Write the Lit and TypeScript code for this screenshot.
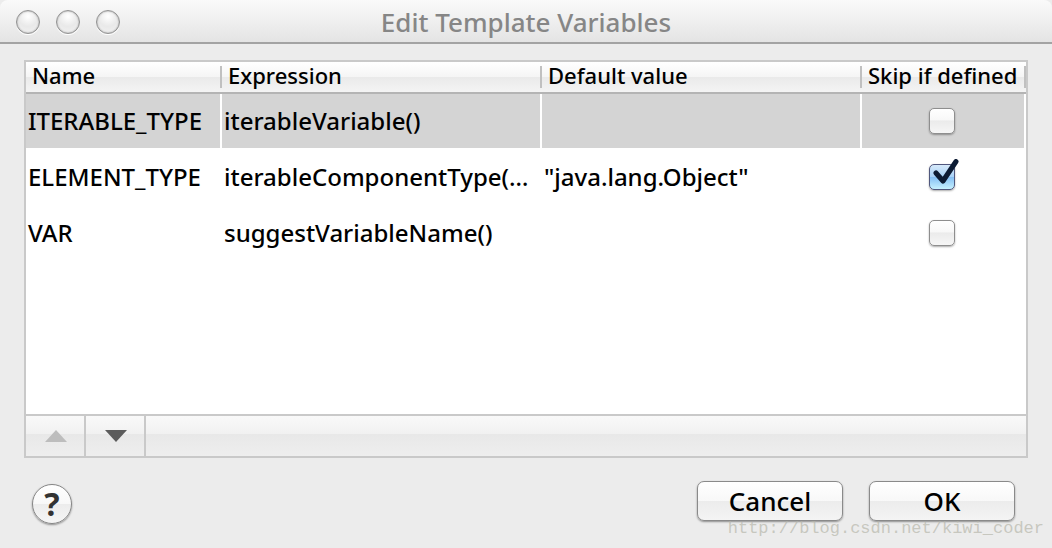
import { LitElement, html, css, svg, nothing } from "lit";
import { customElement, state } from "lit/decorators.js";
import { classMap } from "lit/directives/class-map.js";

interface TemplateVariable {
  name: string;
  expression: string;
  defaultValue: string;
  skip: boolean;
}

const checkMark = svg`<path d="M7 14 L14 22 L27 2.5" fill="none" stroke="#0c1b33" stroke-width="5" stroke-linecap="round" stroke-linejoin="round"/>`;

@customElement("app-root")
export class AppRoot extends LitElement {
  static styles = css`
    :host {
      display: flex;
      flex-direction: column;
      box-sizing: border-box;
      min-height: 100vh;
      position: relative;
      background: #ececec;
      color: #000;
      font-family: "Noto Sans", "Open Sans", sans-serif;
      font-size: 24px;
      font-weight: 500;
      line-height: 32px;
    }
    * {
      box-sizing: border-box;
    }
    button {
      font: inherit;
      color: inherit;
      padding: 0;
      margin: 0;
    }
    .titlebar {
      display: grid;
      grid-template-columns: 1fr auto 1fr;
      align-items: center;
      height: 44px;
      padding: 2px 16px 0;
      background: linear-gradient(#fafafa, #e4e4e4);
      border-bottom: 2px solid #a3a3a3;
      border-radius: 8px 8px 0 0;
    }
    .lights {
      display: flex;
      gap: 16px;
    }
    .light {
      width: 24px;
      height: 24px;
      border: 1px solid #929292;
      border-radius: 50%;
      background: radial-gradient(circle at 50% 25%, #ffffff, #e9e9e9 50%, #f3f3f3);
      box-shadow: inset 0 0 2px #00000066, 0 1px 0 #ffffff;
    }
    h1 {
      margin: 0;
      font-size: 26px;
      font-weight: 500;
      color: #868686;
    }
    .content {
      flex: 1;
      display: flex;
      flex-direction: column;
      padding: 16px 24px 24px;
    }
    .panel {
      flex: 1;
      display: flex;
      flex-direction: column;
      border: 2px solid #c9c9c9;
      background: #fff;
    }
    .list {
      flex: 1;
    }
    table {
      width: 100%;
      table-layout: fixed;
      border-collapse: separate;
      border-spacing: 0;
    }
    .col-name {
      width: 19.6%;
    }
    .col-wide {
      width: 32%;
    }
    .col-skip {
      width: 16.4%;
    }
    th {
      height: 32px;
      padding: 0;
      font-size: 22px;
      font-weight: 500;
      line-height: 18px;
      text-align: left;
      white-space: nowrap;
      background: linear-gradient(#ffffff, #f5f5f5 50%, #eaeaea 51%, #f4f4f4);
      border-bottom: 2px solid #b4b4b4;
    }
    th span {
      display: block;
      padding: 0 0 4px 6px;
      border-right: 2px solid #c0c0c0;
    }
    td {
      height: 56px;
      padding: 0 2px;
      overflow: hidden;
      white-space: nowrap;
      text-overflow: ellipsis;
      border-right: 2px solid #fff;
      border-bottom: 2px solid #fff;
    }
    .selected td {
      background: #d4d4d4;
    }
    td.skip {
      padding: 0 2px 0 0;
      overflow: visible;
    }
    .check {
      position: relative;
      display: block;
      width: 26px;
      height: 26px;
      margin: 0 auto;
    }
    .check input {
      appearance: none;
      display: block;
      width: 26px;
      height: 26px;
      margin: 0;
      border: 1px solid #8e8e8e;
      border-radius: 5px;
      background: linear-gradient(#ffffff, #f8f8f8 45%, #ebebeb 50%, #f6f6f6);
      box-shadow: 0 1px 2px #00000055;
    }
    .check input:checked {
      border-color: #50577d;
      background: linear-gradient(#d6e9fa, #a9d2f7 48%, #86c0f4 52%, #c6f1ff);
    }
    .check svg {
      position: absolute;
      left: 0;
      bottom: 3px;
      width: 32px;
      height: 28px;
      pointer-events: none;
    }
    .tools {
      display: flex;
      height: 42px;
      border-top: 2px solid #c9c9c9;
      background: linear-gradient(#f9f9f9, #f1f1f1 45%, #e8e8e8 46%, #eeeeee);
    }
    .tool {
      display: flex;
      align-items: center;
      justify-content: center;
      width: 60px;
      padding-left: 2px;
      border: 0;
      border-right: 2px solid #c9c9c9;
      background: none;
      color: #5c5c5c;
    }
    .tool:disabled {
      color: #bdbdbd;
    }
    .tool svg {
      width: 22px;
      height: 12px;
      fill: currentColor;
    }
    .footer {
      display: flex;
      align-items: flex-start;
      gap: 26px;
      padding: 23px 13px 0 8px;
    }
    .help {
      width: 40px;
      height: 40px;
      margin: 3px auto 0 0;
      border: 1px solid #858585;
      border-radius: 50%;
      background: linear-gradient(#ffffff, #f8f8f8 50%, #ececec 51%, #f6f6f6);
      box-shadow: 0 1px 2px #00000066;
      color: #333;
      font-size: 32px;
      font-weight: 700;
    }
    .push {
      width: 146px;
      height: 40px;
      border: 1px solid #8a8a8a;
      border-radius: 7px;
      background: linear-gradient(#ffffff, #f8f8f8 50%, #ececec 51%, #f4f4f4);
      box-shadow: 0 1px 2px #00000066;
      font-size: 26px;
    }
    .watermark {
      position: absolute;
      right: 8px;
      bottom: 7px;
      color: #b4b4a8aa;
      font-family: "Liberation Mono", monospace;
      font-size: 17px;
      font-weight: 400;
      line-height: 24px;
      pointer-events: none;
    }
  `;

  @state() private selected = 0;
  @state() private variables: TemplateVariable[] = [
    { name: "ITERABLE_TYPE", expression: "iterableVariable()", defaultValue: "", skip: false },
    {
      name: "ELEMENT_TYPE",
      expression: "iterableComponentType(…",
      defaultValue: '"java.lang.Object"',
      skip: true,
    },
    { name: "VAR", expression: "suggestVariableName()", defaultValue: "", skip: false },
  ];

  private toggle(index: number) {
    this.variables = this.variables.map((v, i) => (i === index ? { ...v, skip: !v.skip } : v));
  }

  private move(step: number) {
    const from = this.selected;
    const to = from + step;
    const next = [...this.variables];
    [next[from], next[to]] = [next[to], next[from]];
    this.variables = next;
    this.selected = to;
  }

  private renderRow(v: TemplateVariable, index: number) {
    return html`<tr
      class=${classMap({ selected: index === this.selected })}
      @click=${() => (this.selected = index)}
    >
      <td>${v.name}</td>
      <td>${v.expression}</td>
      <td>${v.defaultValue}</td>
      <td class="skip">
        <label class="check">
          <input
            type="checkbox"
            aria-label="Skip if defined"
            .checked=${v.skip}
            @change=${() => this.toggle(index)}
          />
          ${v.skip ? html`<svg viewBox="0 0 32 28" aria-hidden="true">${checkMark}</svg>` : nothing}
        </label>
      </td>
    </tr>`;
  }

  render() {
    return html`
      <header class="titlebar">
        <div class="lights">
          <span class="light"></span><span class="light"></span><span class="light"></span>
        </div>
        <h1>Edit Template Variables</h1>
      </header>
      <main class="content">
        <section class="panel">
          <div class="list">
            <table>
              <colgroup>
                <col class="col-name" />
                <col class="col-wide" />
                <col class="col-wide" />
                <col class="col-skip" />
              </colgroup>
              <thead>
                <tr>
                  <th scope="col"><span>Name</span></th>
                  <th scope="col"><span>Expression</span></th>
                  <th scope="col"><span>Default value</span></th>
                  <th scope="col"><span>Skip if defined</span></th>
                </tr>
              </thead>
              <tbody>
                ${this.variables.map((v, i) => this.renderRow(v, i))}
              </tbody>
            </table>
          </div>
          <div class="tools">
            <button
              class="tool"
              aria-label="Move up"
              ?disabled=${this.selected === 0}
              @click=${() => this.move(-1)}
            >
              <svg viewBox="0 0 22 12"><path d="M0 12 L11 0 L22 12 Z" /></svg>
            </button>
            <button
              class="tool"
              aria-label="Move down"
              ?disabled=${this.selected === this.variables.length - 1}
              @click=${() => this.move(1)}
            >
              <svg viewBox="0 0 22 12"><path d="M0 0 L22 0 L11 12 Z" /></svg>
            </button>
          </div>
        </section>
        <footer class="footer">
          <button class="help" aria-label="Help">?</button>
          <button class="push">Cancel</button>
          <button class="push">OK</button>
        </footer>
      </main>
      <span class="watermark">http://blog.csdn.net/kiwi_coder</span>
    `;
  }
}
